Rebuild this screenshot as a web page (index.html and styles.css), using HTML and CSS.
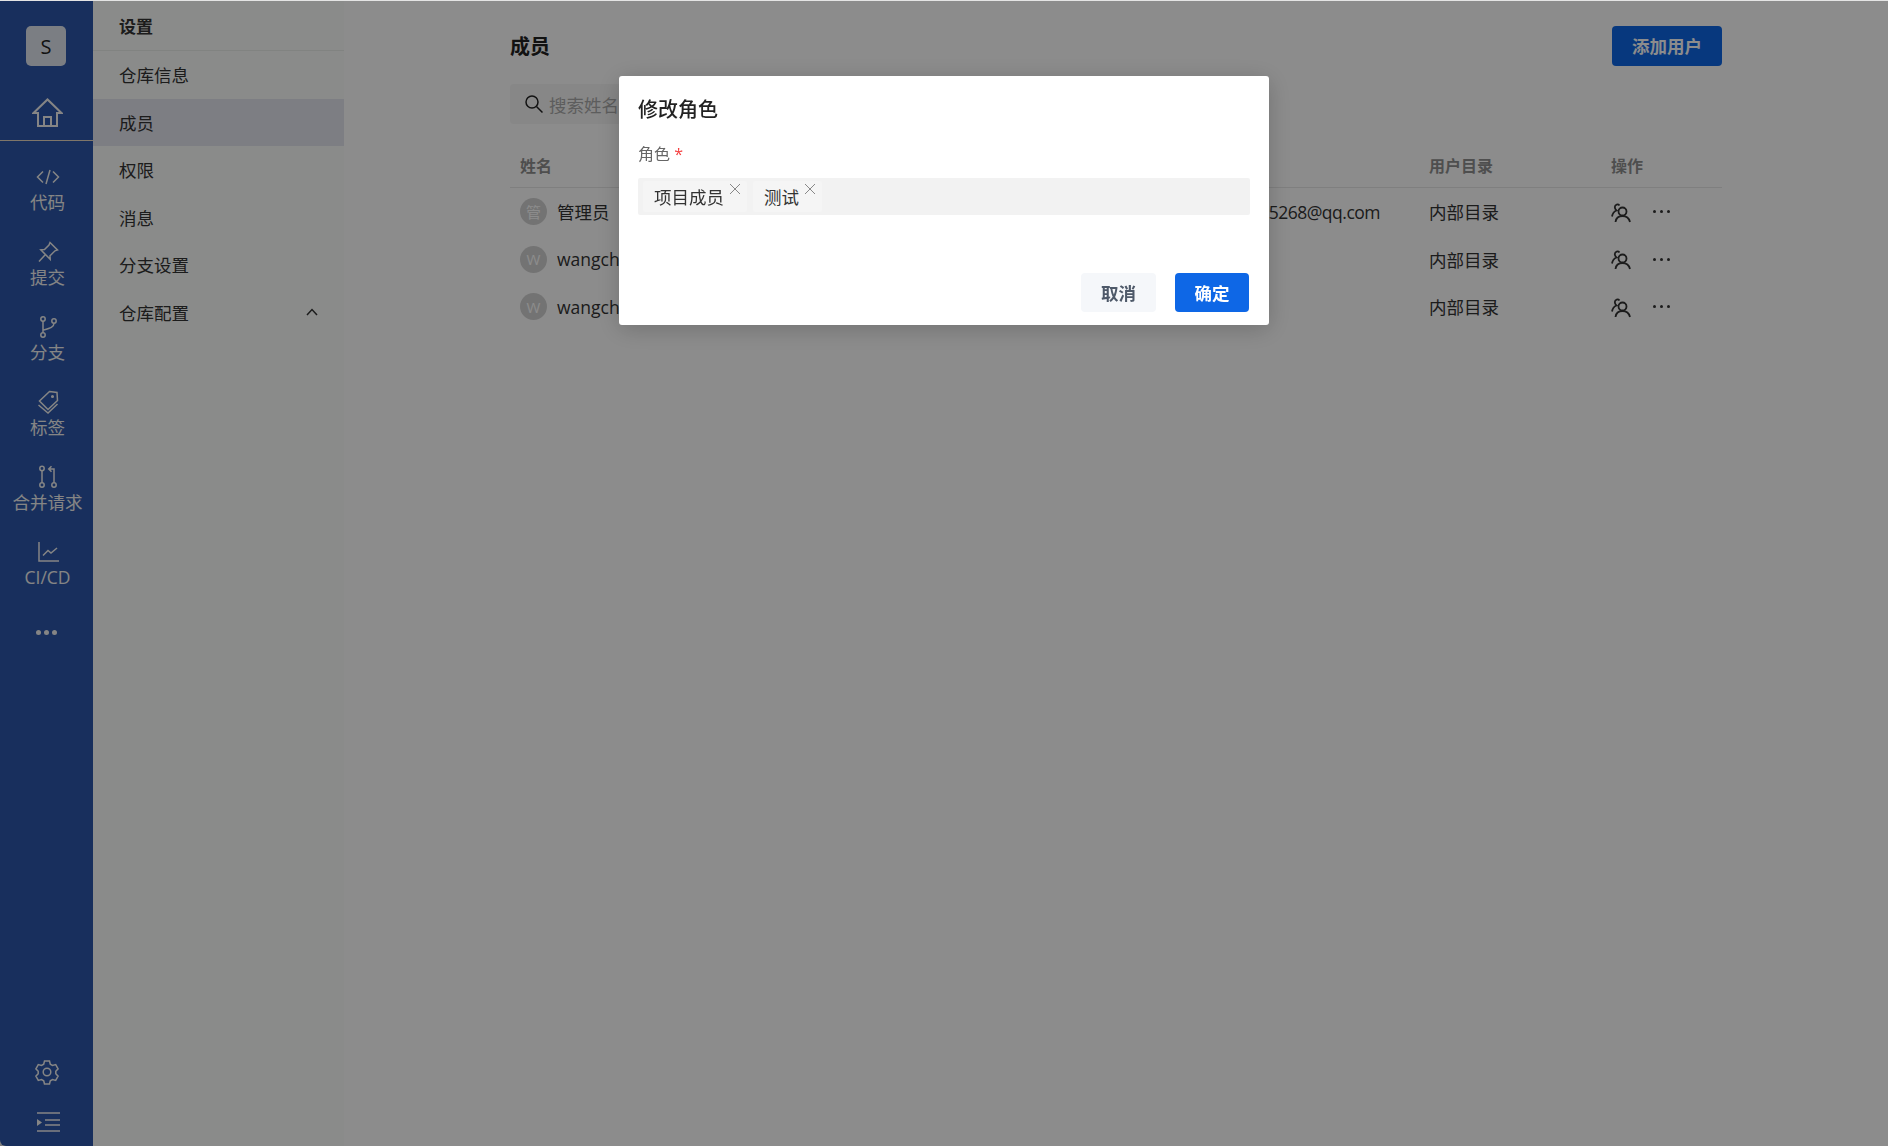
FILE: index.html
```html
<!DOCTYPE html>
<html lang="zh-CN">
<head>
  <meta charset="UTF-8" />
  <title>成员</title>
  <link rel="stylesheet" href="styles.css">
</head>
<body>

  <div class="app">
    <nav class="rail">
      <div class="logo">S</div>
      <a class="home">
        <svg width="31" height="29" viewBox="0 0 31 29"><path d="M1.500 15 15.500 1.500 29.500 15h-4.500v13H6V15zM12 28v-9h7v9"/></svg>
      </a>
      <a class="rail-item">
        <svg width="24" height="24" viewBox="0 0 24 24"><path d="M7 6.500 1.500 12 7 17.500M17 6.500l5.500 5.500-5.500 5.500M14 5l-4 14"/></svg>
        <span>代码</span>
      </a>
      <a class="rail-item">
        <svg width="24" height="24" viewBox="0 0 24 24"><path d="M14 2.500 21.500 10l-2.500.8-5 5 .2 3.500L4.800 9.800 8.500 9.500 13 5zM9 15l-6 6.500"/></svg>
        <span>提交</span>
      </a>
      <a class="rail-item">
        <svg width="24" height="24" viewBox="0 0 24 24"><circle cx="7" cy="4" r="2.200"/><circle cx="7" cy="20" r="2.200"/><circle cx="18" cy="6" r="2.200"/><path d="M7 6.200v11.600M18 8.200c0 4-4 5-11 7"/></svg>
        <span>分支</span>
      </a>
      <a class="rail-item">
        <svg width="24" height="24" viewBox="0 0 24 24"><path d="M13.500 1.500 21 2.500l.5 8-9.500 9L3.500 11zM2.500 15l9.500 8 9.500-9"/><circle cx="16.500" cy="6.500" r=".8"/></svg>
        <span>标签</span>
      </a>
      <a class="rail-item">
        <svg width="24" height="24" viewBox="0 0 24 24"><circle cx="6" cy="3.500" r="2.200"/><circle cx="6" cy="20" r="2.200"/><circle cx="18" cy="20" r="2.200"/><path d="M6 5.700v12M18 17.800V4h-5M15.500 1.200 12.700 4l2.800 2.800"/></svg>
        <span>合并请求</span>
      </a>
      <a class="rail-item">
        <svg width="24" height="24" viewBox="0 0 24 24"><path d="M3 2v19h20M7 15.500l5-5 3 2.500 6-5"/></svg>
        <span class="latin">CI/CD</span>
      </a>
      <div class="rail-more"><i></i><i></i><i></i></div>
      <div class="rail-bottom">
        <svg class="gear" width="26" height="26" viewBox="0 0 26 26"><path d="M10.500 2h5l.8 3.200 2.200 1.300 3.200-.9 2.400 4.300-2.300 2.300v2.600l2.300 2.300-2.400 4.300-3.200-.9-2.200 1.300-.8 3.200h-5l-.8-3.200-2.200-1.300-3.200.9-2.400-4.300 2.300-2.300v-2.600L1.900 9.900l2.400-4.300 3.200.9 2.200-1.300z"/><circle cx="13" cy="13" r="3.800"/></svg>
        <svg class="indent" width="24" height="22" viewBox="0 0 24 22"><path d="M1 2h23M9 9h15M9 14h15M1 20h23"/><path class="solid" d="M1 8l5 3.500L1 15z"/></svg>
      </div>
    </nav>

    <aside class="side">
      <div class="side-title">设置</div>
      <a class="side-item">仓库信息</a>
      <a class="side-item active">成员</a>
      <a class="side-item">权限</a>
      <a class="side-item">消息</a>
      <a class="side-item">分支设置</a>
      <a class="side-item">仓库配置
        <svg width="12" height="8" viewBox="0 0 12 8"><path d="M1 7l5-5.500L11 7"/></svg>
      </a>
    </aside>

    <main class="main">
      <div class="head">
        <h1>成员</h1>
        <button class="btn btn-primary btn-add">添加用户</button>
      </div>
      <div class="search">
        <svg width="20" height="20" viewBox="0 0 20 20"><circle cx="8" cy="8" r="6"/><path d="m12.500 12.500 6 6"/></svg>
        <span>搜索姓名</span>
      </div>
      <div class="row row-head">
        <div>姓名</div><div></div><div>用户目录</div><div>操作</div>
      </div>
      <div class="row">
        <div class="user"><span class="avatar">管</span>管理员</div>
        <div class="email">5268@qq.com</div>
        <div>内部目录</div>
        <div class="ops">
          <svg width="20" height="20" viewBox="0 0 20 20"><circle cx="11.500" cy="8.500" r="4"/><path d="M4.500 19c.5-4 3-6 7-6s6.500 2 7.500 6M8.500 2.500C7 .5 4 1.500 3.800 4c0 2 1 3 1.700 3.500C3 8.500 1.500 10.500 1 13.500"/></svg>
          <span class="dots"><i></i><i></i><i></i></span>
        </div>
      </div>
      <div class="row">
        <div class="user"><span class="avatar">W</span>wangchu</div>
        <div class="email"></div>
        <div>内部目录</div>
        <div class="ops">
          <svg width="20" height="20" viewBox="0 0 20 20"><circle cx="11.500" cy="8.500" r="4"/><path d="M4.500 19c.5-4 3-6 7-6s6.500 2 7.500 6M8.500 2.500C7 .5 4 1.500 3.800 4c0 2 1 3 1.700 3.500C3 8.500 1.500 10.500 1 13.500"/></svg>
          <span class="dots"><i></i><i></i><i></i></span>
        </div>
      </div>
      <div class="row">
        <div class="user"><span class="avatar">W</span>wangchu</div>
        <div class="email"></div>
        <div>内部目录</div>
        <div class="ops">
          <svg width="20" height="20" viewBox="0 0 20 20"><circle cx="11.500" cy="8.500" r="4"/><path d="M4.500 19c.5-4 3-6 7-6s6.500 2 7.500 6M8.500 2.500C7 .5 4 1.500 3.800 4c0 2 1 3 1.700 3.500C3 8.500 1.500 10.500 1 13.500"/></svg>
          <span class="dots"><i></i><i></i><i></i></span>
        </div>
      </div>
    </main>
  </div>

  <div class="mask"></div>

  <div class="modal">
    <h2>修改角色</h2>
    <label>角色 <em>*</em></label>
    <div class="select">
      <span class="tag">项目成员
        <svg width="12" height="12" viewBox="0 0 12 12"><path d="m1 1 10 10M11 1 1 11"/></svg>
      </span>
      <span class="tag">测试
        <svg width="12" height="12" viewBox="0 0 12 12"><path d="m1 1 10 10M11 1 1 11"/></svg>
      </span>
    </div>
    <div class="modal-foot">
      <button class="btn btn-cancel">取消</button>
      <button class="btn btn-primary">确定</button>
    </div>
  </div>

</body>
</html>
```

FILE: styles.css
```css
* { box-sizing: border-box; }
html, body { height: 100%; }
body {
  margin: 0;
  font-family: "Open Sans", "Noto Sans CJK SC", sans-serif;
  font-size: 17.5px;
  color: #333;
  background: #e4e4e4;
  overflow: hidden;
}
svg { fill: none; stroke: currentColor; stroke-width: 1.5; display: block; }

.app { display: flex; height: 1145px; margin-top: 1px; }

/* left icon rail */
.rail {
  width: 93px;
  flex: none;
  background: #2c57a9;
  color: #f2f2f2;
  display: flex;
  flex-direction: column;
  align-items: center;
  padding-top: 25px;
  border-bottom-left-radius: 6px;
}
.logo {
  width: 40px;
  height: 40px;
  margin-left: -1px;
  background: #e0e6ef;
  color: #222;
  border-radius: 5px;
  display: flex;
  align-items: center;
  justify-content: center;
  font-size: 20px;
}
.home {
  width: 100%;
  height: 75px;
  border-bottom: 1px solid #e8d8c0;
  display: flex;
  justify-content: center;
  padding: 32px 0 0 2px;
  margin-bottom: 22px;
}
.home svg { stroke-width: 2; }
.rail-item {
  height: 75px;
  display: flex;
  flex-direction: column;
  align-items: center;
  line-height: 24px;
  gap: 1px;
  padding-top: 2px;
  margin-left: 2px;
}
.rail-more { display: flex; gap: 3px; margin-top: 17px; margin-left: -1px; }
.rail-more i { width: 5px; height: 5px; border-radius: 50%; background: #f2f2f2; }
.rail-bottom {
  margin-top: auto;
  display: flex;
  flex-direction: column;
  align-items: center;
  gap: 26px;
  padding-bottom: 13px;
  margin-left: 2px;
}
.gear { margin-left: -1px; }
.indent .solid { fill: currentColor; stroke: none; }

/* settings menu */
.side {
  width: 251px;
  flex: none;
  background: #fbfdfc;
  color: #333;
}
.side-title {
  height: 50px;
  padding: 12px 26px 0;
  font-weight: 700;
  font-size: 17px;
  border-bottom: 1px solid #ecefec;
}
.side-item {
  height: 47.500px;
  display: flex;
  align-items: center;
  justify-content: space-between;
  padding: 0 26px;
}
.side-item.active { background: #e3e5ee; }

/* members */
.main { flex: 1; padding: 25px 166px 0 166px; background: #fff; }
.head { display: flex; justify-content: space-between; align-items: center; height: 40px; }
h1 { margin: 0 0 1px; font-size: 20px; font-weight: 700; color: #222; }
.btn {
  border: 0;
  border-radius: 4px;
  font: 700 17.500px "Open Sans", "Noto Sans CJK SC", sans-serif;
  height: 39px;
  width: 75px;
}
.btn-primary { background: #0e67e6; color: #fff; }
.btn-add { width: 110px; height: 40px; padding-bottom: 3px; }
.btn-cancel { background: #f5f7fa; color: #4e5969; }
.search {
  width: 300px;
  height: 40px;
  margin-top: 18px;
  background: #f6f6f6;
  border-radius: 4px;
  display: flex;
  align-items: center;
  gap: 5px;
  padding-left: 14px;
  color: #aaa;
}
.search svg { color: #222; }
.row {
  display: grid;
  grid-template-columns: 500px 409px 182px 1fr;
  align-items: center;
  height: 47.500px;
  padding-left: 10px;
}
.row-head {
  margin-top: 23px;
  height: 41px;
  font-size: 16px;
  font-weight: 700;
  color: #8f8f8f;
  border-bottom: 1px solid #e8e8e8;
  padding-bottom: 4px;
}
.user { display: flex; align-items: center; gap: 10px; }
.avatar {
  width: 27px;
  height: 27px;
  border-radius: 50%;
  background: #d2d2d2;
  color: #fff;
  font-size: 15px;
  display: flex;
  align-items: center;
  justify-content: center;
}
.email { text-align: right; padding-right: 49px; letter-spacing: -.5px; }
.ops { display: flex; align-items: center; gap: 22px; margin-top: 2px; }
.ops svg { stroke-width: 1.800; }
.ops .dots { margin-top: -2px; }
.dots { display: flex; gap: 4px; }
.dots i { width: 3px; height: 3px; border-radius: 50%; background: #333; }

/* dialog */
.mask { position: fixed; inset: 1px 0 0 0; background: rgba(0, 0, 0, .45); }
.modal {
  position: fixed;
  left: 619px;
  top: 76px;
  width: 650px;
  height: 249px;
  background: #fff;
  border-radius: 3px;
  box-shadow: 0 4px 24px rgba(0, 0, 0, .2);
  padding: 20px 19px 13px;
  display: flex;
  flex-direction: column;
}
h2 { margin: 0; font-size: 20px; font-weight: 500; color: #222; line-height: 28px; }
label { display: block; margin-top: 18px; font-size: 16px; color: #666; line-height: 24px; }
label em { font-style: normal; color: #f53f3f; }
.select {
  margin-top: 12px;
  height: 37px;
  width: 612px;
  background: #f2f2f2;
  border-radius: 2px;
  display: flex;
  align-items: center;
  gap: 6px;
  padding-left: 5px;
}
.tag {
  position: relative;
  height: 31px;
  display: flex;
  align-items: center;
  padding: 0 23px 0 11px;
  background: #f5f5f5;
  border-radius: 2px;
}
.tag svg { position: absolute; right: 6px; top: 2px; color: #888; stroke-width: 1; }
.modal-foot { margin-top: auto; display: flex; justify-content: flex-end; gap: 19px; padding-right: 1px; }
.modal-foot .btn-primary { width: 74px; }
```
